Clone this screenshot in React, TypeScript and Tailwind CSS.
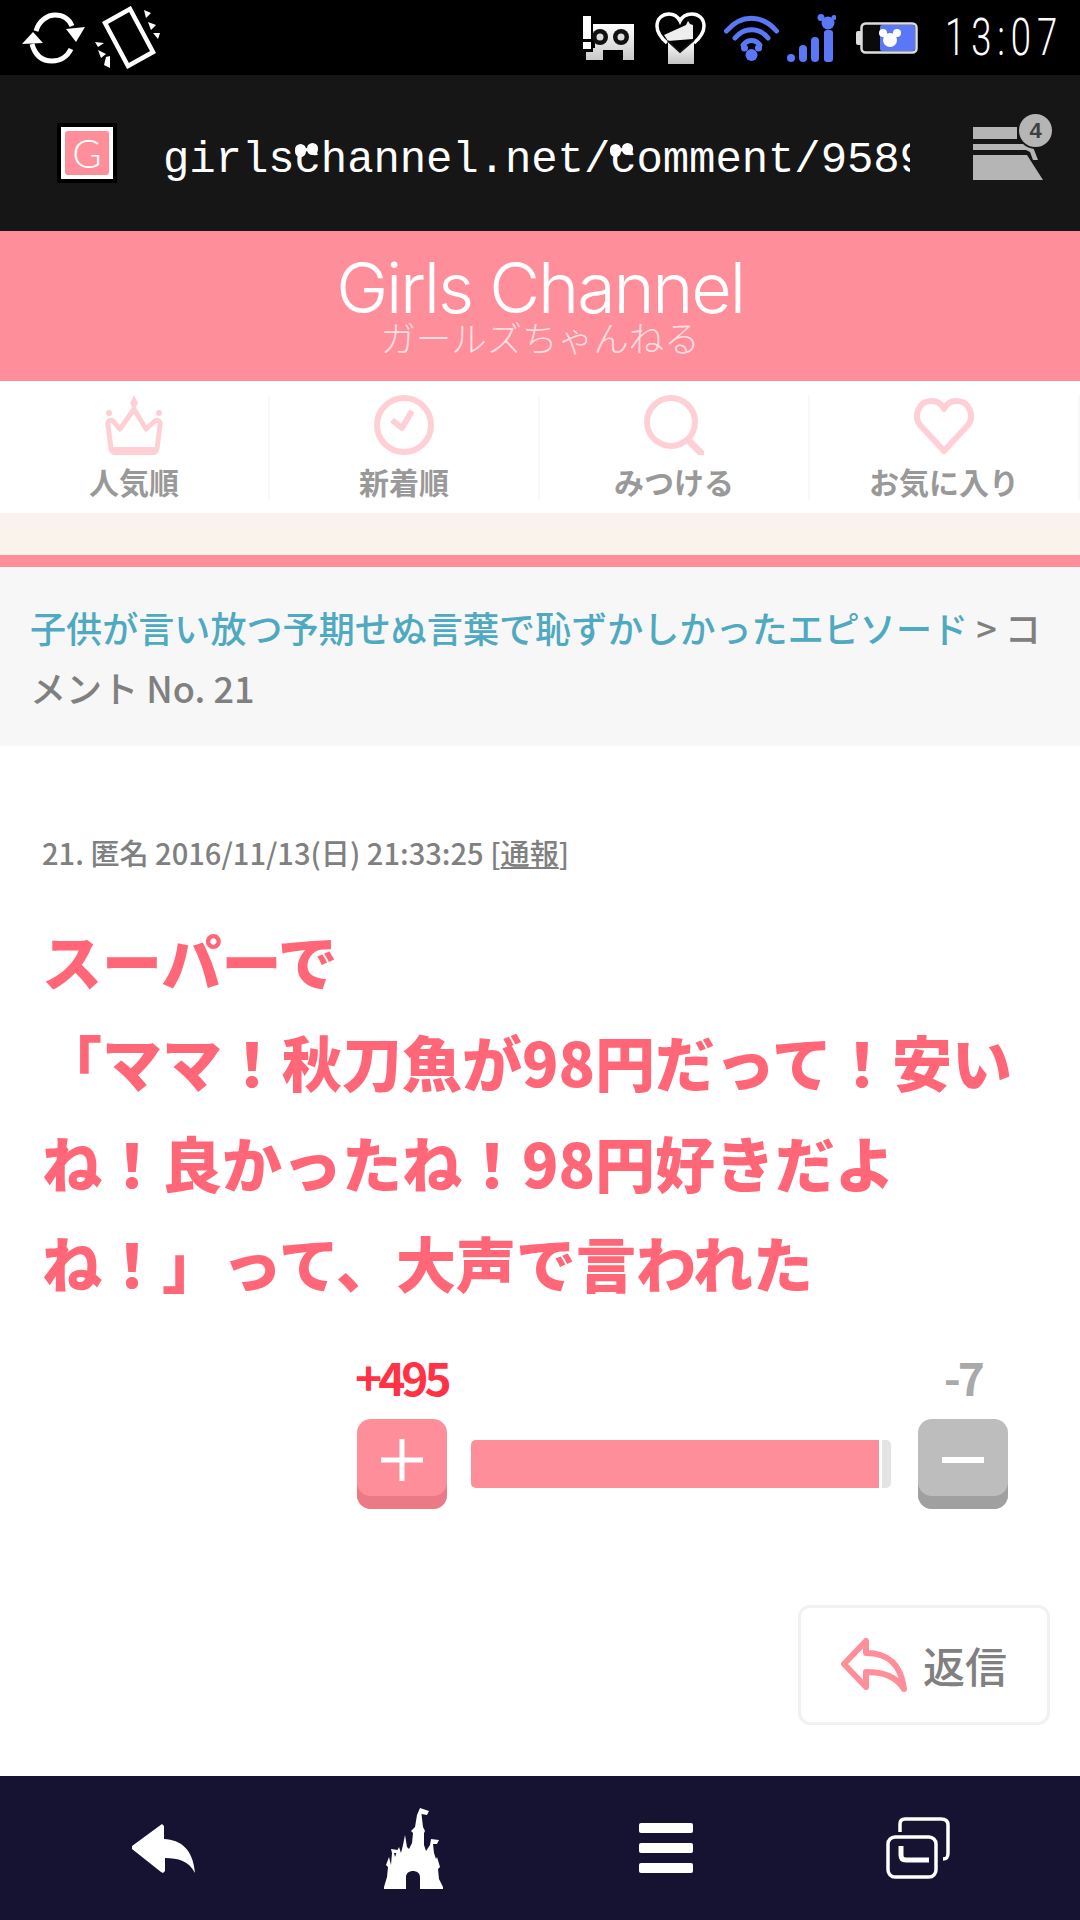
const JP = "font-['Noto_Sans_CJK_JP',sans-serif]";

const SyncIcon = () => (
  <svg width="63" height="52" viewBox="0 0 63 52" fill="none" className="shrink-0">
    <path d="M14 19C17 8 26 3 33 3C41 3 47 7 50 14" stroke="#fff" strokeWidth="5" />
    <path d="M63 15L44 17L54 30Z" fill="#fff" />
    <path d="M49 37C45 45 38 49 30 49C20 49 13 43 10 32" stroke="#fff" strokeWidth="5" />
    <path d="M0 32L21 31L11 20Z" fill="#fff" />
  </svg>
);

const RotateIcon = () => (
  <svg width="65" height="63" viewBox="0 0 65 63" fill="none" className="shrink-0">
    <path d="M10 17L35 3L58 46L33 60Z" stroke="#fff" strokeWidth="4.5" />
    <path d="M49 4L56 7L51 12ZM53 16L61 19L56 24ZM58 27L65 27L63 33ZM0 36L9 37L3 41ZM3 44L11 48L6 52ZM11 51L15 50L15 62L9 59Z" fill="#fff" />
  </svg>
);

const AlertIcon = () => (
  <svg width="53" height="44" viewBox="0 0 53 44" className="shrink-0">
    <defs>
      <linearGradient id="ag" x1="0" y1="0" x2="0" y2="1">
        <stop offset="0" stopColor="#fff" />
        <stop offset="1" stopColor="#c9c9c9" />
      </linearGradient>
    </defs>
    <path d="M12 8H53V44H42V34H22V44H5V36H12V32H14V24H12Z" fill="url(#ag)" />
    <rect x="2" y="0" width="8" height="23" fill="#fff" />
    <rect x="2" y="26" width="8" height="7" fill="#fff" />
    <circle cx="19" cy="21" r="8" fill="#111" />
    <circle cx="19" cy="21" r="3.5" fill="#ddd" />
    <circle cx="40" cy="21" r="8" fill="#111" />
    <circle cx="40" cy="21" r="3.5" fill="#ddd" />
  </svg>
);

const HeartMailIcon = () => (
  <svg width="51" height="52" viewBox="0 0 51 52" fill="none" className="shrink-0">
    <defs>
      <linearGradient id="hg" x1="0" y1="0" x2="0" y2="1">
        <stop offset="0" stopColor="#fff" />
        <stop offset="1" stopColor="#c4c4c4" />
      </linearGradient>
    </defs>
    <path d="M12 31C5 25 2 19 2 14C2 6 8 2 14 2C19 2 23 5 25 9C27 5 31 2 37 2C43 2 49 6 49 14C49 19 46 25 39 31" stroke="#fff" strokeWidth="3.5" />
    <path d="M9 23L31 13L33 9L35 12L38 13V27L13 29Z" fill="#eee" />
    <path d="M13 29L25 40L39 28V52H13Z" fill="url(#hg)" />
    <path d="M13 29L25 40L39 28" stroke="#111" strokeWidth="2" />
  </svg>
);

const WifiIcon = () => (
  <svg width="55" height="46" viewBox="0 0 55 46" fill="none" stroke="#5a78f5" strokeLinecap="round" className="shrink-0">
    <path d="M2.5 16C17 -1 38 -1 52.5 16" strokeWidth="5" />
    <path d="M11 23C20 12 35 12 44 23" strokeWidth="5" />
    <path d="M19 30C24 24 31 24 36 30" strokeWidth="5" />
    <g fill="#5a78f5" stroke="none">
      <circle cx="27.500" cy="40" r="6" />
      <circle cx="20.500" cy="33" r="3.500" />
      <circle cx="34.500" cy="33" r="3.500" />
    </g>
  </svg>
);

const SignalIcon = () => (
  <svg width="49" height="48" viewBox="0 0 49 48" fill="#5a78f5" className="shrink-0">
    <circle cx="4" cy="44" r="4" />
    <rect x="12" y="31" width="8" height="17" rx="4" />
    <rect x="24" y="23" width="8" height="25" rx="4" />
    <rect x="37" y="16" width="9" height="32" rx="3" />
    <circle cx="41" cy="9" r="6.500" />
    <circle cx="34" cy="3.500" r="3.500" />
    <circle cx="47" cy="3.500" r="2.500" />
  </svg>
);

const BatteryIcon = () => (
  <svg width="62" height="32" viewBox="0 0 62 32" className="shrink-0">
    <rect x="0" y="9" width="6" height="14" rx="2" fill="#ddd" />
    <rect x="5.500" y="1.500" width="55" height="29" rx="4" fill="#0a0a0a" stroke="#ddd" strokeWidth="2.500" />
    <rect x="24" y="3" width="35" height="26" rx="2" fill="#5a78f5" />
    <g fill="#fff">
      <circle cx="34" cy="18" r="7" />
      <circle cx="27" cy="11" r="4" />
      <circle cx="41" cy="11" r="4" />
    </g>
  </svg>
);

const TabsCountIcon = () => (
  <div className="relative h-[53px] w-[70px] shrink-0">
    <svg width="70" height="53" viewBox="0 0 70 53" fill="#b5b5b5">
      <rect x="0" y="0" width="44" height="12" />
      <path d="M0 17H56L59 20H60L65 33H60L57 25L53 23H0Z" />
      <path d="M0 28H54L70 53H0Z" />
    </svg>
    <span className="absolute -right-[11px] -top-[15px] flex h-[37px] w-[37px] items-center justify-center rounded-full border-[2px] border-[#161616] bg-[#b5b5b5] font-['Liberation_Sans',sans-serif] text-[22px] font-bold text-[#3f3f3f]">
      4
    </span>
  </div>
);

// "c" with the little ears the launcher's font puts on it
const EarC = () => (
  <span className="relative">
    c
    <span className="absolute left-[0px] top-[9px] h-[13px] w-[11px] rounded-full bg-white" />
    <span className="absolute left-[12px] top-[8px] h-[12px] w-[11px] rounded-full bg-white" />
  </span>
);

const CrownIcon = () => (
  <svg width="60" height="60" viewBox="0 0 60 60" fill="none" stroke="#ffcfd6" strokeWidth="5" strokeLinejoin="round">
    <path d="M4 30C3 27 6 24 9 26L16 34L30 14L42 34L51 26C54 24 57 27 56 30L53 54C52 57 50 58 47 58H13C10 58 8 57 7 54Z" />
    <path d="M8 55H52" strokeWidth="6" />
    <g fill="#ffcfd6" stroke="none">
      <path d="M30 0L34 8L30 16L26 8Z" />
      <circle cx="5" cy="18" r="3" />
      <circle cx="55" cy="18" r="3" />
    </g>
  </svg>
);

const ClockIcon = () => (
  <svg width="60" height="60" viewBox="0 0 60 60" fill="none" stroke="#ffcfd6">
    <circle cx="30" cy="30" r="27" strokeWidth="6" />
    <path d="M18 25L28 33L38 16" strokeWidth="6" strokeLinejoin="round" />
  </svg>
);

const SearchIcon = () => (
  <svg width="60" height="60" viewBox="0 0 60 60" fill="none" stroke="#ffcfd6" strokeLinecap="round">
    <circle cx="27" cy="27" r="24" strokeWidth="6" />
    <path d="M44 45L57 58" strokeWidth="7" />
  </svg>
);

const HeartIcon = () => (
  <svg width="60" height="60" viewBox="0 0 60 60" fill="none" stroke="#ffcfd6" strokeWidth="6" strokeLinejoin="round">
    <path d="M30 56L6 30C-1 21 5 6 17 6C23 6 28 9 30 14C32 9 37 6 43 6C55 6 61 21 54 30Z" />
  </svg>
);

const ReplyIcon = () => (
  <svg width="66" height="54" viewBox="0 0 66 54" fill="none" stroke="#ff8e9b" strokeWidth="6" strokeLinejoin="round" strokeLinecap="round">
    <path d="M3 26L25 3V15C48 15 60 27 63 51C55 39 44 34 25 34V49Z" />
  </svg>
);

const BackIcon = () => (
  <svg width="64" height="49" viewBox="0 0 64 49" fill="#fff">
    <path d="M31 0L33 2V15C50 16 62 25 64 49C58 37 47 34 34 34V47L32 49L30 48L1 25V22Z" />
  </svg>
);

const CastleIcon = () => (
  <svg width="60" height="82" viewBox="0 0 60 82" fill="#fff">
    <path d="M36 1L45 4L43 8L37.500 7L39 20L41 24L40 26V38L42 44L46 38L47 32L55 33L53 37L49 37L50 46L52 52L53 50L56 60L54 62L55 72L59 80V82H36V70C36 62 22 62 22 70V82H0V80L3 70L4 60L2 58L5 50L7 58L8 46L7 42L14 43L13 46L10 46L11 50L13 44L15 40L17 46L19 38L21 28L23 40L25 42L28 36L29 26L27 24L31 20L33 8Z" />
  </svg>
);

const HamburgerIcon = () => (
  <div className="flex h-[50px] w-[54px] flex-col justify-between">
    <div className="h-[10px] rounded-[2px] bg-white" />
    <div className="h-[10px] rounded-[2px] bg-white" />
    <div className="h-[10px] rounded-[2px] bg-white" />
  </div>
);

const WindowsIcon = () => (
  <svg width="64" height="62" viewBox="0 0 64 62" fill="none" stroke="#fff" strokeWidth="3.500">
    <path d="M14 15V7C14 3 16 2 19 2H55C60 2 62 4 62 8V36C62 40 61 42 57 42" />
    <rect x="2" y="20" width="48" height="40" rx="7" />
    <path d="M15 29V38C15 42 17 43 20 43H43" strokeWidth="5" />
  </svg>
);

const navItems = [
  { label: "人気順", icon: <CrownIcon /> },
  { label: "新着順", icon: <ClockIcon /> },
  { label: "みつける", icon: <SearchIcon /> },
  { label: "お気に入り", icon: <HeartIcon /> },
];

export default function App() {
  return (
    <div className={`flex h-[1920px] w-[1080px] flex-col overflow-hidden bg-white ${JP}`}>
      {/* status bar */}
      <div className="flex h-[75px] shrink-0 items-center bg-black pl-[22px] pr-[22px]">
        <SyncIcon />
        <div className="ml-[10px]">
          <RotateIcon />
        </div>
        <div className="ml-[421px]">
          <AlertIcon />
        </div>
        <div className="ml-[21px]">
          <HeartMailIcon />
        </div>
        <div className="ml-[18px]">
          <WifiIcon />
        </div>
        <div className="ml-[8px]">
          <SignalIcon />
        </div>
        <div className="ml-[20px]">
          <BatteryIcon />
        </div>
        <div className="ml-[27px] w-[114px] shrink-0 whitespace-nowrap">
          <span className="inline-block origin-left scale-x-[0.7] font-['Roboto',sans-serif] text-[52px] font-light leading-none tracking-[8.500px] text-white">
            13:07
          </span>
        </div>
      </div>

      {/* url bar */}
      <div className="flex h-[156px] shrink-0 items-center bg-[#161616] pl-[57px]">
        <div className="h-[60px] w-[60px] shrink-0 border-[4px] border-black bg-white p-[4px]">
          <div className="flex h-full w-full items-center justify-center rounded-[3px] bg-[#ff8e9b] font-['Lato',sans-serif] text-[40px] font-light leading-none text-white">
            G
          </div>
        </div>
        <div className="ml-[46px] w-[747px] overflow-hidden whitespace-nowrap pt-[14px] font-['Liberation_Mono',monospace] text-[44px] leading-[56px] tracking-[-0.1px] text-white">
          girls<EarC />hannel.net/<EarC />omment/958912
        </div>
        <div className="ml-[63px]">
          <TabsCountIcon />
        </div>
      </div>

      {/* site header */}
      <div className="flex h-[150px] shrink-0 flex-col items-center bg-[#ff8e9b] pt-[27px]">
        <div className="font-['Inter',sans-serif] text-[70px] font-light leading-[60px] tracking-[-2.200px] text-white">
          Girls Channel
        </div>
        <div className="mt-[2px] text-[35.500px] font-light leading-[34px] text-[#ffdfe3]">
          ガールズちゃんねる
        </div>
      </div>

      {/* nav */}
      <div className="grid h-[132px] shrink-0 grid-cols-4 items-start bg-white pt-[14px]">
        {navItems.map((item) => (
          <div
            key={item.label}
            className="flex h-[105px] flex-col items-center border-r-2 border-[#f8f8f8]"
          >
            {item.icon}
            <span className="mt-[7px] text-[30px] font-bold leading-[38px] text-[#999999]">
              {item.label}
            </span>
          </div>
        ))}
      </div>

      <div className="h-[42px] shrink-0 bg-[#faf3eb]" />
      <div className="h-[12px] shrink-0 bg-[#ff8e9b]" />

      {/* breadcrumb */}
      <div className="h-[179px] shrink-0 bg-[#f7f7f7] pl-[30px] pr-[34px] pt-[30px] text-[36.100px] font-medium leading-[60px] text-[#808080]">
        <span className="text-[#4fa9c0]">子供が言い放つ予期せぬ言葉で恥ずかしかったエピソード</span>
        {" > コメント No. 21"}
      </div>

      {/* comment */}
      <div className="flex min-h-0 flex-1 flex-col pl-[42px] pr-[30px] pt-[86px]">
        <div className="text-[29.100px] font-medium leading-[40px] text-[#808080]">
          21. 匿名 2016/11/13(日) 21:33:25 [<span className="underline">通報</span>]
        </div>
        <p className="mt-[38px] text-[60px] font-black leading-[100.800px] text-[#ff6678]">
          スーパーで
          <br />
          「ママ！秋刀魚が98円だって！安い
          <br />
          ね！良かったね！98円好きだよ
          <br />
          ね！」って、大声で言われた
        </p>

        {/* votes */}
        <div className="ml-[313px] mt-[38px] flex w-[653px] justify-between text-[46px] font-bold leading-[50px]">
          <span className="tracking-[-4px] text-[#ff3345]">+495</span>
          <span className="mr-[26px] tracking-[-3px] text-[#a9a9a9]">-7</span>
        </div>
        <div className="ml-[315px] mt-[18px] flex items-center">
          <div className="flex h-[90px] w-[90px] shrink-0 items-center justify-center rounded-[14px] bg-[#ff8e9b] pb-[8px] shadow-[inset_0_-13px_0_#ec7a86]">
            <svg width="42" height="42" viewBox="0 0 42 42" fill="#fff">
              <path d="M18.500 0H23.500V18.500H42V23.500H23.500V42H18.500V23.500H0V18.500H18.500Z" />
            </svg>
          </div>
          <div className="ml-[24px] flex h-[48px] w-[420px] shrink-0 overflow-hidden rounded-[5px] bg-[#e4e4e4]">
            <div className="h-full w-[411px] border-r-[3px] border-white bg-[#ff8e9b]" />
          </div>
          <div className="ml-[27px] flex h-[90px] w-[90px] shrink-0 items-center justify-center rounded-[14px] bg-[#bdbdbd] pb-[8px] shadow-[inset_0_-13px_0_#a0a0a0]">
            <div className="h-[6px] w-[42px] bg-white" />
          </div>
        </div>

        {/* reply */}
        <div className="mt-[96px] flex justify-end">
          <div className="flex h-[120px] w-[252px] items-center rounded-[12px] border-[3px] border-[#f1f1f1] pl-[40px]">
            <ReplyIcon />
            <span className="ml-[16px] text-[42px] font-medium leading-none text-[#808080]">返信</span>
          </div>
        </div>
      </div>

      {/* bottom bar */}
      <div className="flex h-[144px] shrink-0 items-center bg-[#151232] pl-[131px]">
        <BackIcon />
        <div className="ml-[189px] -mt-[1px]">
          <CastleIcon />
        </div>
        <div className="ml-[195px]">
          <HamburgerIcon />
        </div>
        <div className="ml-[193px]">
          <WindowsIcon />
        </div>
      </div>
    </div>
  );
}
